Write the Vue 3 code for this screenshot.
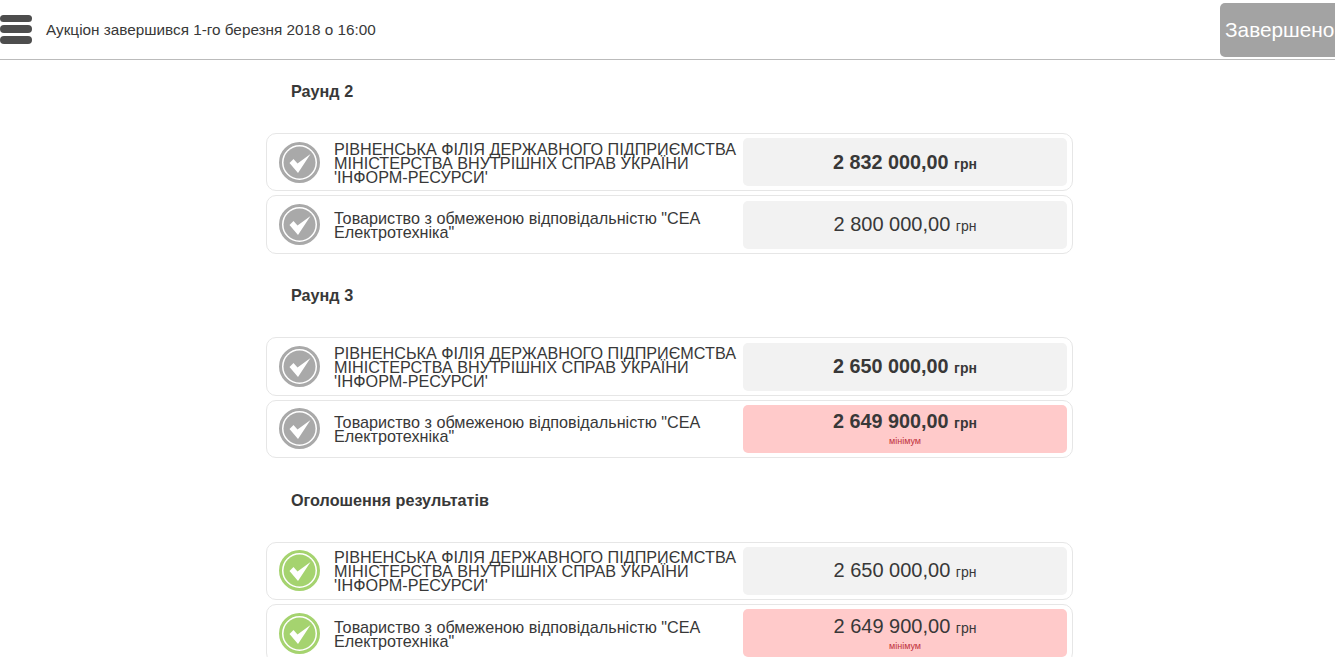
<template>
  <div class="page">
    <header class="topbar">
      <button class="menu" aria-label="Меню">
        <span></span><span></span><span></span>
      </button>
      <div class="status">Аукціон завершився 1-го березня 2018 о 16:00</div>
      <div class="finished">Завершено</div>
    </header>

    <main class="rounds">
      <section v-for="round in rounds" :key="round.title" class="round">
        <h2>{{ round.title }}</h2>
        <div class="rows">
          <div v-for="bid in round.bids" :key="bid.name" class="row">
            <svg class="check" :class="{ done: round.done }" viewBox="0 0 41 41">
              <circle class="ring" cx="20.5" cy="20.5" r="19" />
              <circle class="fill" cx="20.5" cy="20.5" r="16" />
              <path d="M10.5 21 L14.5 17 L18.5 21.5 L31.5 12 L19 31 Z" fill="#fff" />
            </svg>
            <div class="name">{{ bid.name }}</div>
            <div class="price" :class="{ min: bid.min, bold: bid.bold }">
              <div class="sum">{{ bid.sum }} <small>грн</small></div>
              <div v-if="bid.min" class="note">мінімум</div>
            </div>
          </div>
        </div>
      </section>
    </main>
  </div>
</template>

<script setup>
const first = 'РІВНЕНСЬКА ФІЛІЯ ДЕРЖАВНОГО ПІДПРИЄМСТВА МІНІСТЕРСТВА ВНУТРІШНІХ СПРАВ УКРАЇНИ \'ІНФОРМ-РЕСУРСИ\''
const second = 'Товариство з обмеженою відповідальністю "СЕА Електротехніка"'

const rounds = [
  {
    title: 'Раунд 2',
    bids: [
      { name: first, sum: '2 832 000,00', bold: true },
      { name: second, sum: '2 800 000,00' }
    ]
  },
  {
    title: 'Раунд 3',
    bids: [
      { name: first, sum: '2 650 000,00', bold: true },
      { name: second, sum: '2 649 900,00', bold: true, min: true }
    ]
  },
  {
    title: 'Оголошення результатів',
    done: true,
    bids: [
      { name: first, sum: '2 650 000,00' },
      { name: second, sum: '2 649 900,00', min: true }
    ]
  }
]
</script>

<style>
html, body {
  overflow: hidden;
  background: #fff;
}
</style>

<style scoped>
.page {
  height: 657px;
  overflow: hidden;
  font-family: "Liberation Sans", Arial, sans-serif;
  color: #383838;
}

.topbar {
  height: 59px;
  border-bottom: 1px solid #bbb;
  display: flex;
  align-items: center;
}

.menu {
  width: 32px;
  height: 29px;
  padding: 0;
  margin: -1px 14px 0 0;
  border: 0;
  background: none;
  display: flex;
  flex-direction: column;
  justify-content: space-between;
}

.menu span {
  display: block;
  height: 7.5px;
  border-radius: 4px;
  background: #4d4d4d;
}

.status {
  font-size: 15.3px;
  flex: 1;
}

.finished {
  width: 115px;
  height: 54px;
  margin-top: 1px;
  border-radius: 5px 0 0 5px;
  background: #a3a3a3;
  color: #fff;
  font-size: 20.8px;
  display: flex;
  align-items: center;
  padding-left: 5px;
  box-sizing: border-box;
  white-space: nowrap;
}

.rounds {
  width: 807px;
  margin-left: 266px;
}

.round {
  padding: 21px 0 10.6px;
}

h2 {
  margin: 0 0 32px 25px;
  font-size: 16.2px;
  line-height: 20px;
  font-weight: bold;
}

.rows {
  display: flex;
  flex-direction: column;
  gap: 4px;
}

.row {
  height: 58.4px;
  box-sizing: border-box;
  border: 1px solid #e6e6e6;
  border-radius: 10px;
  display: flex;
  align-items: center;
  padding: 0 5px 0 12px;
}

.check {
  width: 41px;
  height: 41px;
  flex: none;
}

.ring {
  fill: none;
  stroke: #a9a9a9;
  stroke-width: 3;
}

.fill {
  fill: #a9a9a9;
}

.check.done .ring {
  stroke: #a5d36f;
}

.check.done .fill {
  fill: #a5d36f;
}

.name {
  flex: 1;
  margin: 1px 0 0 14px;
  padding-right: 2px;
  font-size: 16.2px;
  line-height: 14px;
}

.price {
  width: 324px;
  height: 48px;
  padding-top: 1px;
  box-sizing: border-box;
  flex: none;
  border-radius: 5px;
  background: #f2f2f2;
  text-align: center;
  display: flex;
  flex-direction: column;
  justify-content: center;
}

.price.min {
  background: #ffcaca;
  padding: 0 0 1px;
}

.sum {
  font-size: 20px;
  line-height: 22px;
}

.sum small {
  font-size: 14px;
}

.price.bold .sum {
  font-size: 19.8px;
  font-weight: bold;
}

.note {
  margin-top: 2px;
  font-size: 9px;
  line-height: 10px;
  color: #c0303a;
}
</style>
